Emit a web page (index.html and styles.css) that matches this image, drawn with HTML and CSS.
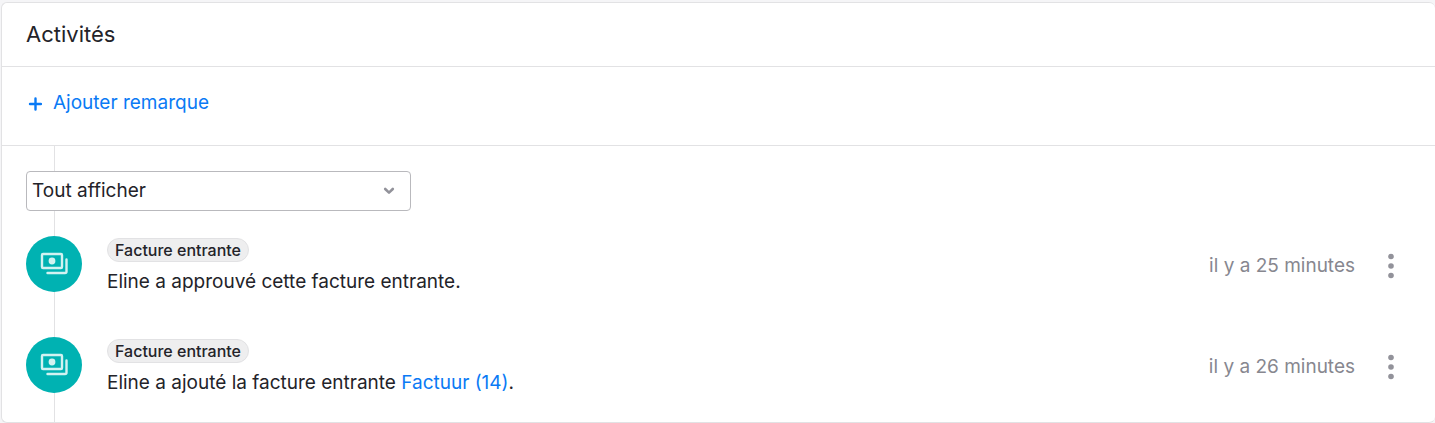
FILE: index.html
```html
<!DOCTYPE html>
<html lang="fr">
<head>
    <meta charset="UTF-8">
    <meta name="viewport" content="width=device-width, initial-scale=1.0">
    <title>Activités</title>
    <link rel="stylesheet" href="styles.css">
</head>
<body>
    <section class="card">
        <div class="card-header">
            <h2>Activités</h2>
        </div>

        <div class="card-actions">
            <button type="button" class="btn-add">
                <svg class="icon-plus" viewBox="0 0 14 14" aria-hidden="true">
                    <path d="M7.500 1.500v11M2 7h11"/>
                </svg>
                Ajouter remarque
            </button>
        </div>

        <!-- Timeline -->
        <div class="timeline">
            <div class="filter">
                <select class="filter-select" aria-label="Filtrer les activités">
                    <option>Tout afficher</option>
                </select>
                <svg class="filter-arrow" viewBox="0 0 12 8" aria-hidden="true">
                    <path d="M2.200 2l3.800 3.600 3.800-3.600"/>
                </svg>
            </div>

            <ul class="activities">
                <li class="activity">
                    <span class="activity-icon">
                        <svg viewBox="0 0 28 24" aria-hidden="true">
                            <rect x="2" y="2" width="20" height="14" rx="1"/>
                            <path d="M26.500 7.500v12q0 1.500-1.500 1.500H7.500"/>
                            <circle cx="12" cy="9" r="3.400"/>
                        </svg>
                    </span>
                    <div class="activity-body">
                        <span class="badge">Facture entrante</span>
                        <p>Eline a approuvé cette facture entrante.</p>
                    </div>
                    <time class="activity-time">il y a 25 minutes</time>
                    <button type="button" class="btn-menu" aria-label="Options">
                        <svg viewBox="0 0 6 26" aria-hidden="true">
                            <circle cx="3" cy="3.500" r="2.800"/>
                            <circle cx="3" cy="13" r="2.800"/>
                            <circle cx="3" cy="22.500" r="2.800"/>
                        </svg>
                    </button>
                </li>
                <li class="activity">
                    <span class="activity-icon">
                        <svg viewBox="0 0 28 24" aria-hidden="true">
                            <rect x="2" y="2" width="20" height="14" rx="1"/>
                            <path d="M26.500 7.500v12q0 1.500-1.500 1.500H7.500"/>
                            <circle cx="12" cy="9" r="3.400"/>
                        </svg>
                    </span>
                    <div class="activity-body">
                        <span class="badge">Facture entrante</span>
                        <p>Eline a ajouté la facture entrante <a href="#">Factuur (14)</a>.</p>
                    </div>
                    <time class="activity-time">il y a 26 minutes</time>
                    <button type="button" class="btn-menu" aria-label="Options">
                        <svg viewBox="0 0 6 26" aria-hidden="true">
                            <circle cx="3" cy="3.500" r="2.800"/>
                            <circle cx="3" cy="13" r="2.800"/>
                            <circle cx="3" cy="22.500" r="2.800"/>
                        </svg>
                    </button>
                </li>
            </ul>
        </div>
    </section>
</body>
</html>
```
FILE: styles.css
```css
:root {
    --text-color: #232329;
    --link-color: #0a7af5;
    --muted-color: #87878f;
    --border-color: #e2e2e4;
    --teal: #00b2b2;
}

* {
    box-sizing: border-box;
}

body {
    margin: 0;
    padding: 2px 0 0 1px;
    background: #f5f5f7;
    color: var(--text-color);
    font-family: Inter, "Liberation Sans", sans-serif;
    font-size: 19px;
    line-height: 28px;
}

h2,
p,
ul {
    margin: 0;
    padding: 0;
}

button {
    padding: 0;
    border: none;
    background: none;
    font: inherit;
    cursor: pointer;
}

a {
    color: var(--link-color);
    text-decoration: none;
}

.card {
    background: white;
    border: 1px solid var(--border-color);
    border-right: none;
    border-radius: 6px;
}

.card-header {
    padding: 17px 24px 18px;
    border-bottom: 1px solid var(--border-color);
}

.card-header h2 {
    font-size: 22px;
    font-weight: 400;
}

.card-actions {
    display: flex;
    padding: 22px 24px 28px;
    border-bottom: 1px solid var(--border-color);
}

.btn-add {
    display: flex;
    align-items: center;
    gap: 11px;
    padding-left: 2px;
    color: var(--link-color);
}

.icon-plus {
    width: 14px;
    height: 14px;
    margin-top: 1px;
    fill: none;
    stroke: currentColor;
    stroke-width: 2.4;
    stroke-linecap: round;
}

/* the vertical line runs behind the filter and the icons */
.timeline {
    padding: 25px 24px;
    background: linear-gradient(var(--border-color), var(--border-color)) 52px 0 / 1px 100% no-repeat;
}

.filter {
    position: relative;
    max-width: 385px;
    margin-bottom: 25px;
}

.filter-select {
    display: block;
    width: 100%;
    height: 40px;
    padding: 0 32px 0 5px;
    border: 1px solid #b9b9bd;
    border-radius: 4px;
    background: white;
    color: inherit;
    font: inherit;
    appearance: none;
}

.filter-arrow {
    position: absolute;
    top: 16px;
    right: 16px;
    width: 12px;
    height: 8px;
    fill: none;
    stroke: #92929a;
    stroke-width: 2.6;
    stroke-linecap: round;
    stroke-linejoin: round;
    pointer-events: none;
}

.activities {
    display: grid;
    gap: 41px;
    list-style: none;
}

.activity {
    display: flex;
    align-items: center;
}

.activity-icon {
    display: flex;
    align-items: center;
    justify-content: center;
    align-self: flex-start;
    width: 56px;
    height: 56px;
    border-radius: 50%;
    background: var(--teal);
}

.activity-icon svg {
    width: 28px;
    height: 24px;
    fill: none;
    stroke: #d2f2f1;
    stroke-width: 2.4;
    stroke-linecap: round;
}

.activity-icon circle {
    fill: #d2f2f1;
    stroke: none;
}

.activity-body {
    display: flex;
    flex: 1;
    flex-direction: column;
    align-items: flex-start;
    gap: 6px;
    padding-top: 2px;
    margin-left: 25px;
}

.badge {
    padding: 0 7px;
    border: 1px solid var(--border-color);
    border-radius: 12px;
    background: #eeeeef;
    font-size: 16px;
    font-weight: 500;
    line-height: 22px;
}

.activity-time {
    color: var(--muted-color);
}

.btn-menu {
    display: flex;
    justify-content: center;
    width: 40px;
    margin: 0 0 0 16px;
}

.btn-menu svg {
    width: 6px;
    height: 26px;
    fill: #92929a;
}
```
